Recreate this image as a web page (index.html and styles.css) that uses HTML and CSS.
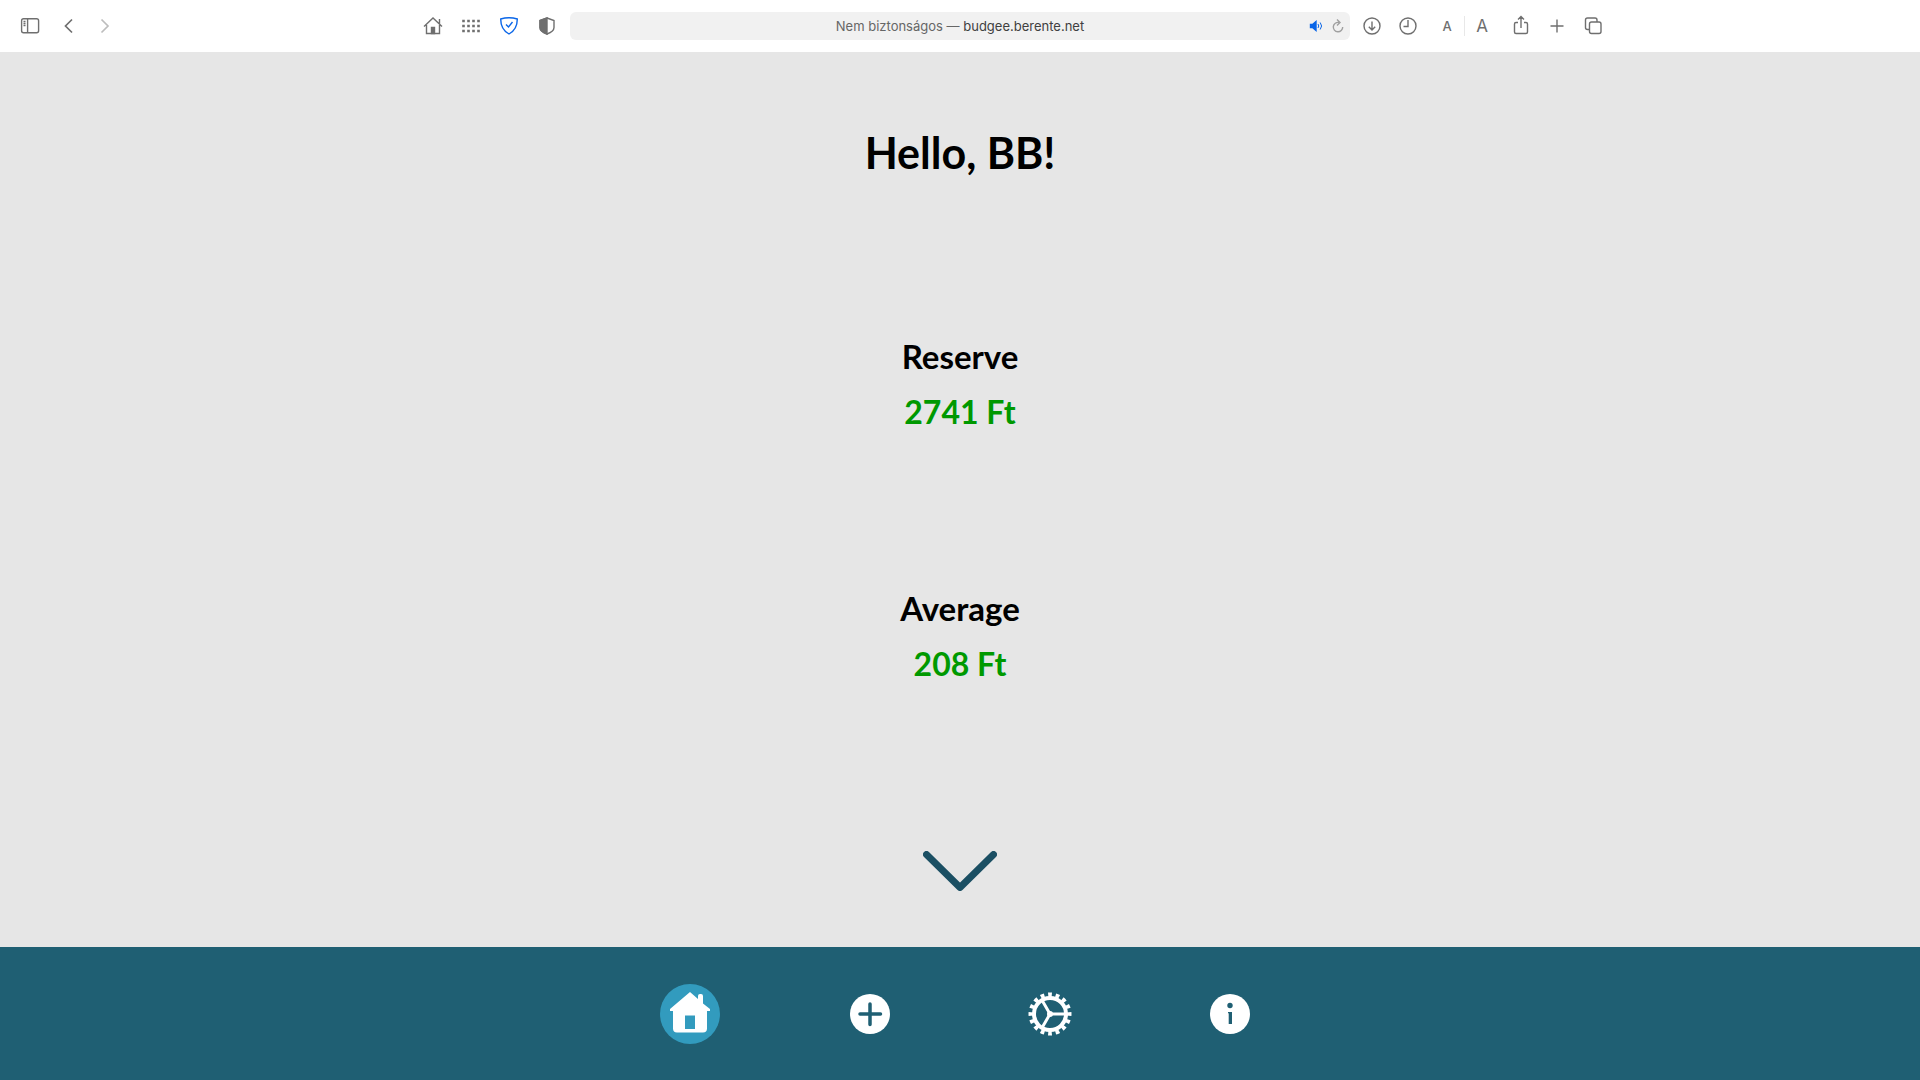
FILE: index.html
```html
<!DOCTYPE html>
<html lang="hu">
<head>
<meta charset="utf-8">
<title>Budgee</title>
<link rel="stylesheet" href="styles.css">
</head>
<body>
<header class="toolbar">
  <div class="side">
    <div class="group group-start">
      <button class="tool" aria-label="Sidebar"><svg viewBox="0 0 24 24"><rect x="3.600" y="4.700" width="17" height="14" rx="2"/><path d="M9.600 4.700v14M5.500 7.500h2M5.500 9.500h2M5.500 11.500h2"/></svg></button>
      <button class="tool" aria-label="Back"><svg class="bold" viewBox="0 0 24 24"><path d="M16 5.500L9.500 12l6.500 6.500"/></svg></button>
      <button class="tool" aria-label="Forward" disabled><svg class="bold" viewBox="0 0 24 24"><path d="M7.500 5.500L14 12l-6.500 6.500"/></svg></button>
    </div>
    <div class="group group-center">
      <button class="tool" aria-label="Home"><svg viewBox="0 0 24 24"><path d="M3 12.500L12 4l9 8.500M5.500 11v8.500h13V11M18.500 10V5"/><path class="solid" d="M10.500 13.500h3v6h-3z"/></svg></button>
      <button class="tool" aria-label="Favorites"><svg class="dots" viewBox="0 0 24 24"><path d="M4.500 7h.01M9.500 7h.01M14.500 7h.01M19.500 7h.01M4.500 12h.01M9.500 12h.01M14.500 12h.01M19.500 12h.01M4.500 17h.01M9.500 17h.01M14.500 17h.01M19.500 17h.01"/></svg></button>
      <button class="tool tool-blue" aria-label="Protection"><svg viewBox="0 0 24 24"><path d="M3.700 5Q12 2.500 20.300 5C20.300 12 18.500 16.500 12 20C5.500 16.500 3.700 12 3.700 5z"/><path d="M9 10.500l2.500 2.500L15.500 8"/></svg></button>
      <button class="tool" aria-label="Privacy report"><svg viewBox="0 0 24 24"><path d="M12 4l7 2.500v7C19 16 16 18.500 12 20C8 18.500 5 16 5 13.500v-7z"/><path class="solid" d="M12 4L5 6.500v7C5 16 8 18.500 12 20z"/></svg></button>
    </div>
  </div>
  <div class="address">
    <a class="address-text" href="#">Nem biztonságos — <span class="host">budgee.berente.net</span></a>
    <div class="address-tools">
      <button class="tool tool-small tool-blue" aria-label="Mute"><svg viewBox="0 0 16 16"><path class="solid" d="M2.500 6.500h2L8 3.500v9L4.500 9.500h-2z"/><path class="waves" d="M10 6q1.500 2 0 4M12.200 4.500q2.800 3.500 0 7"/></svg></button>
      <button class="tool tool-small tool-light" aria-label="Reload"><svg viewBox="0 0 16 16"><path d="M9 4.500A4.700 4.700 0 1 0 12.700 9M7 1.500l3 3-3 3"/></svg></button>
    </div>
  </div>
  <div class="group group-end">
    <button class="tool" aria-label="Downloads"><svg viewBox="0 0 24 24"><circle cx="12" cy="12" r="8"/><path d="M12 7.500v8.500M8.800 12.800l3.200 3.200 3.200-3.200"/></svg></button>
    <button class="tool" aria-label="History"><svg viewBox="0 0 24 24"><circle cx="12" cy="12" r="8"/><path d="M12 6v6.500H7.500"/></svg></button>
    <div class="text-size">
      <button class="tool letter" aria-label="Smaller text">A</button>
      <span class="divider"></span>
      <button class="tool letter letter-large" aria-label="Larger text">A</button>
    </div>
    <button class="tool" aria-label="Share"><svg viewBox="0 0 24 24"><path d="M9 8.500H7A1.500 1.500 0 0 0 5.500 10v8A1.500 1.500 0 0 0 7 19.500h10A1.500 1.500 0 0 0 18.500 18v-8A1.500 1.500 0 0 0 17 8.500h-2M12 14V2.500M9 5.500l3-3 3 3"/></svg></button>
    <button class="tool" aria-label="New tab"><svg viewBox="0 0 24 24"><path d="M12 5.500v13M5.500 12h13"/></svg></button>
    <button class="tool" aria-label="Tabs"><svg viewBox="0 0 24 24"><rect x="8.500" y="8" width="11.500" height="11.500" rx="2"/><path d="M8.500 15.500H6.500a2 2 0 0 1-2-2V6a2 2 0 0 1 2-2H14a2 2 0 0 1 2 2v2"/></svg></button>
  </div>
</header>
<main class="content">
  <h1 class="greeting">Hello, BB!</h1>
  <section class="stat">
    <h2 class="stat-title">Reserve</h2>
    <p class="amount">2741 Ft</p>
  </section>
  <section class="stat">
    <h2 class="stat-title">Average</h2>
    <p class="amount">208 Ft</p>
  </section>
  <button class="more" aria-label="More"><svg viewBox="0 0 74 40"><path d="M3.500 3.500L37 36.500L70.500 3.500"/></svg></button>
</main>
<nav class="menu">
  <a class="menu-item active" href="#" aria-label="Home"><svg viewBox="0 0 60 60"><path d="M10 25L30 8l8 7V12q0-2 2-2h1q2 0 2 2v7.500l7 5.500v2h-3v17.500q0 4-4 4H17q-4 0-4-4V27h-3z"/><path class="cut" d="M25 31.500h10V45H25z"/></svg></a>
  <a class="menu-item" href="#" aria-label="Add"><svg viewBox="0 0 60 60"><circle cx="30" cy="30" r="20"/><path class="cross" d="M30 20v20.500M20 30h20.500"/></svg></a>
  <a class="menu-item" href="#" aria-label="Settings"><svg viewBox="0 0 60 60"><circle class="rim" cx="30" cy="30" r="16"/><circle class="teeth" cx="30" cy="30" r="19" pathLength="160"/><path class="spokes" d="M30 30h15M30 30l-7.500-13M30 30l-7.500 13"/><circle cx="30" cy="30" r="3"/></svg></a>
  <a class="menu-item" href="#" aria-label="Info"><svg viewBox="0 0 60 60"><circle cx="30" cy="30" r="20"/><circle class="cut" cx="30" cy="21.500" r="2.700"/><path class="cut" d="M28 28h4v12h-3.300V29.200H28z"/></svg></a>
</nav>
</body>
</html>
```
FILE: styles.css
```css
* { box-sizing: border-box; }
body {
  margin: 0;
  min-height: 100vh;
  display: flex;
  flex-direction: column;
  background: #e6e6e6;
  color: #000;
  font-family: Lato, sans-serif;
}
button { padding: 0; border: 0; background: none; color: inherit; font: inherit; }
svg { display: block; width: 100%; }

.toolbar {
  height: 52px;
  display: grid;
  grid-template-columns: 1fr minmax(0, 780px) 1fr;
  align-items: center;
  background: #fff;
  color: #6f6f6f;
  font-family: Inter, sans-serif;
}
.toolbar svg { fill: none; stroke: currentColor; stroke-width: 1.4; }
.toolbar .bold { stroke-width: 1.7; }
.toolbar .dots { stroke-width: 2.6; stroke-linecap: square; }
.toolbar .solid { fill: currentColor; }
.waves { stroke-width: 1; }
.side { display: flex; justify-content: space-between; }
.group { display: flex; align-items: center; }
.group-start { gap: 14px; padding-left: 18px; }
.group-center { gap: 14px; padding-right: 11px; }
.group-end { gap: 12px; padding-left: 10px; }
.tool { width: 24px; flex: none; }
.tool:disabled { color: #bdbdbd; }
.toolbar .tool-blue { color: #0a66e8; }
.tool-small { width: 16px; }
.tool-light { color: #a0a0a0; }
.address {
  height: 28px;
  display: grid;
  grid-template-columns: 1fr auto 1fr;
  align-items: center;
  padding: 0 4px;
  border-radius: 6px;
  background: #f1f1f1;
}
.address-text { grid-column: 2; font-size: 13px; color: #666; text-decoration: none; }
.host { color: #404040; }
.address-tools { display: flex; gap: 6px; justify-content: flex-end; }
.text-size { display: flex; align-items: center; gap: 5px; padding: 0 3px; }
.divider { width: 1px; height: 20px; background: #e8e8e8; }
.letter { font-size: 13px; font-weight: 500; }
.letter-large { font-size: 17px; font-weight: 400; }

.content { flex: 1; display: flex; flex-direction: column; align-items: center; }
.greeting { margin: 73px 0 147px; font-size: 43px; line-height: 56px; }
.stat { margin-bottom: 140px; text-align: center; }
.stat-title, .amount { margin: 0; font-weight: 700; line-height: 56px; }
.stat-title { font-size: 33px; }
.amount { font-size: 32px; color: #090; }
.more { width: 74px; margin: 19px 0 56px; }
.more svg { fill: none; stroke: #1b4f63; stroke-width: 7; stroke-linecap: round; stroke-linejoin: round; }

.menu {
  display: flex;
  justify-content: center;
  gap: 120px;
  padding: 37px 0 36px;
  background: #1f5f73;
}
.menu-item { width: 60px; height: 60px; border-radius: 50%; color: #1f5f73; }
.menu svg { fill: #fff; }
.menu .active { background: #329bbe; color: #329bbe; }
.menu .cut { fill: currentColor; }
.cross { stroke: currentColor; stroke-width: 3.5; stroke-linecap: round; }
.menu .rim { fill: none; stroke: #fff; stroke-width: 4; }
.menu .teeth { fill: none; stroke: #fff; stroke-width: 5; stroke-dasharray: 5 5; stroke-dashoffset: 2.5; }
.spokes { stroke: #fff; stroke-width: 3; }
```
